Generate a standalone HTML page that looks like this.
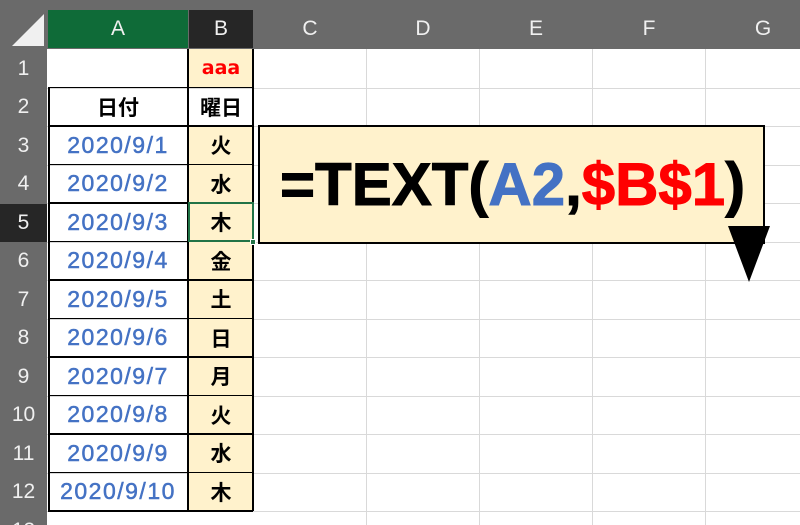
<!DOCTYPE html><html><head><meta charset="utf-8"><style>
html,body{margin:0;width:800px;height:525px;overflow:hidden;background:#fff;font-family:"Liberation Sans","Noto Sans CJK JP",sans-serif;position:relative}
.a{position:absolute;box-sizing:border-box}
.hd{background:#6a6a6a;color:#f0f0f0;font-size:21px;display:flex;align-items:center;justify-content:center}
.c{display:flex;align-items:center;justify-content:center;font-size:21px;font-weight:bold}
.d{font-weight:normal;font-size:23px;letter-spacing:1.5px;-webkit-text-stroke:0.5px #4472c4}
</style></head><body>
<div class="a" style="left:0;top:0;width:800px;height:49px;background:#6a6a6a"></div>
<div class="a" style="left:0;top:0;width:47px;height:525px;background:#6a6a6a"></div>
<svg class="a" style="left:0;top:0" width="47" height="49"><polygon points="44,14 44,46 12,46" fill="#f0f0f0"/></svg>
<div id="g"></div>
<script>
var cols=[[48,188,'A'],[189,253,'B'],[254,366,'C'],[367,479,'D'],[480,592,'E'],[593,705,'F'],[706,820,'G']];
var h='';
cols.forEach(function(c,i){var bg=i==0?'#0f6b38':(i==1?'#262626':'#6a6a6a');
h+='<div class="a hd" style="left:'+c[0]+'px;top:10px;width:'+(c[1]-c[0])+'px;height:38px;background:'+bg+'">'+c[2]+'</div>';
if(i>1)h+='<div class="a" style="left:'+c[1]+'px;top:49px;width:1px;height:476px;background:#d9d9d9"></div>';});
var T=49,R=38.5;
var days=['火','水','木','金','土','日','月','火','水','木'];
for(var r=0;r<13;r++){var y=T+r*R;
h+='<div class="a hd" style="left:0;top:'+(y+1)+'px;width:47px;height:'+(R-1)+'px;background:'+(r==4?'#262626':'#6a6a6a')+'">'+(r+1)+'</div>';
h+='<div class="a" style="left:47px;top:'+(y+R)+'px;width:760px;height:1px;background:#d9d9d9"></div>';
if(r>=2&&r<12){h+='<div class="a c d" style="left:48px;top:'+y+'px;width:140px;height:'+R+'px;color:#4472c4">2020/9/'+(r-1)+'</div>';
h+='<div class="a c" style="left:189px;top:'+y+'px;width:64px;height:'+R+'px;background:#fff2cc">'+days[r-2]+'</div>';}
}
h+='<div class="a" style="left:189px;top:49px;width:64px;height:'+R+'px;background:#fff2cc"></div><div class="a c" style="left:189px;top:49px;width:64px;height:'+R+'px;color:#f00;font-family:\'DejaVu Sans\',sans-serif;font-size:19px">aaa</div>';
h+='<div class="a c" style="left:48px;top:'+(T+R)+'px;width:140px;height:'+R+'px">日付</div>';
h+='<div class="a c" style="left:189px;top:'+(T+R)+'px;width:64px;height:'+R+'px">曜日</div>';
for(var r=1;r<=12;r++)h+='<div class="a" style="left:48px;top:'+(T+r*R-1)+'px;width:205px;height:1.5px;background:#000"></div>';
h+='<div class="a" style="left:187px;top:49px;width:1.5px;height:'+(12*R)+'px;background:#000"></div>';
h+='<div class="a" style="left:252px;top:49px;width:1.5px;height:'+(12*R)+'px;background:#000"></div>';
h+='<div class="a" style="left:48px;top:'+(T+R)+'px;width:1.5px;height:'+(11*R)+'px;background:#000"></div>';
h+='<div class="a" style="left:188px;top:'+(T+4*R-1)+'px;width:66px;height:'+(R+1.5)+'px;border:2px solid #217346"></div>';
h+='<div class="a" style="left:250px;top:'+(T+5*R-3)+'px;width:6px;height:6px;background:#217346;border:1px solid #fff"></div>';
document.getElementById('g').innerHTML=h;
</script>
<div class="a" style="left:258px;top:125px;width:507px;height:119px;background:#fff2cc;border:2px solid #000;font-family:'Liberation Sans',sans-serif;font-weight:bold;font-size:60px;line-height:115px;padding-left:20px;white-space:nowrap;-webkit-text-stroke:1px currentColor">=TEXT(<span style="color:#4472c4">A2</span>,<span style="color:#f00">$B$1</span>)</div>
<svg class="a" style="left:728px;top:226px" width="42" height="58"><polygon points="0,0 42,0 21,56" fill="#000"/></svg>
</body></html>
